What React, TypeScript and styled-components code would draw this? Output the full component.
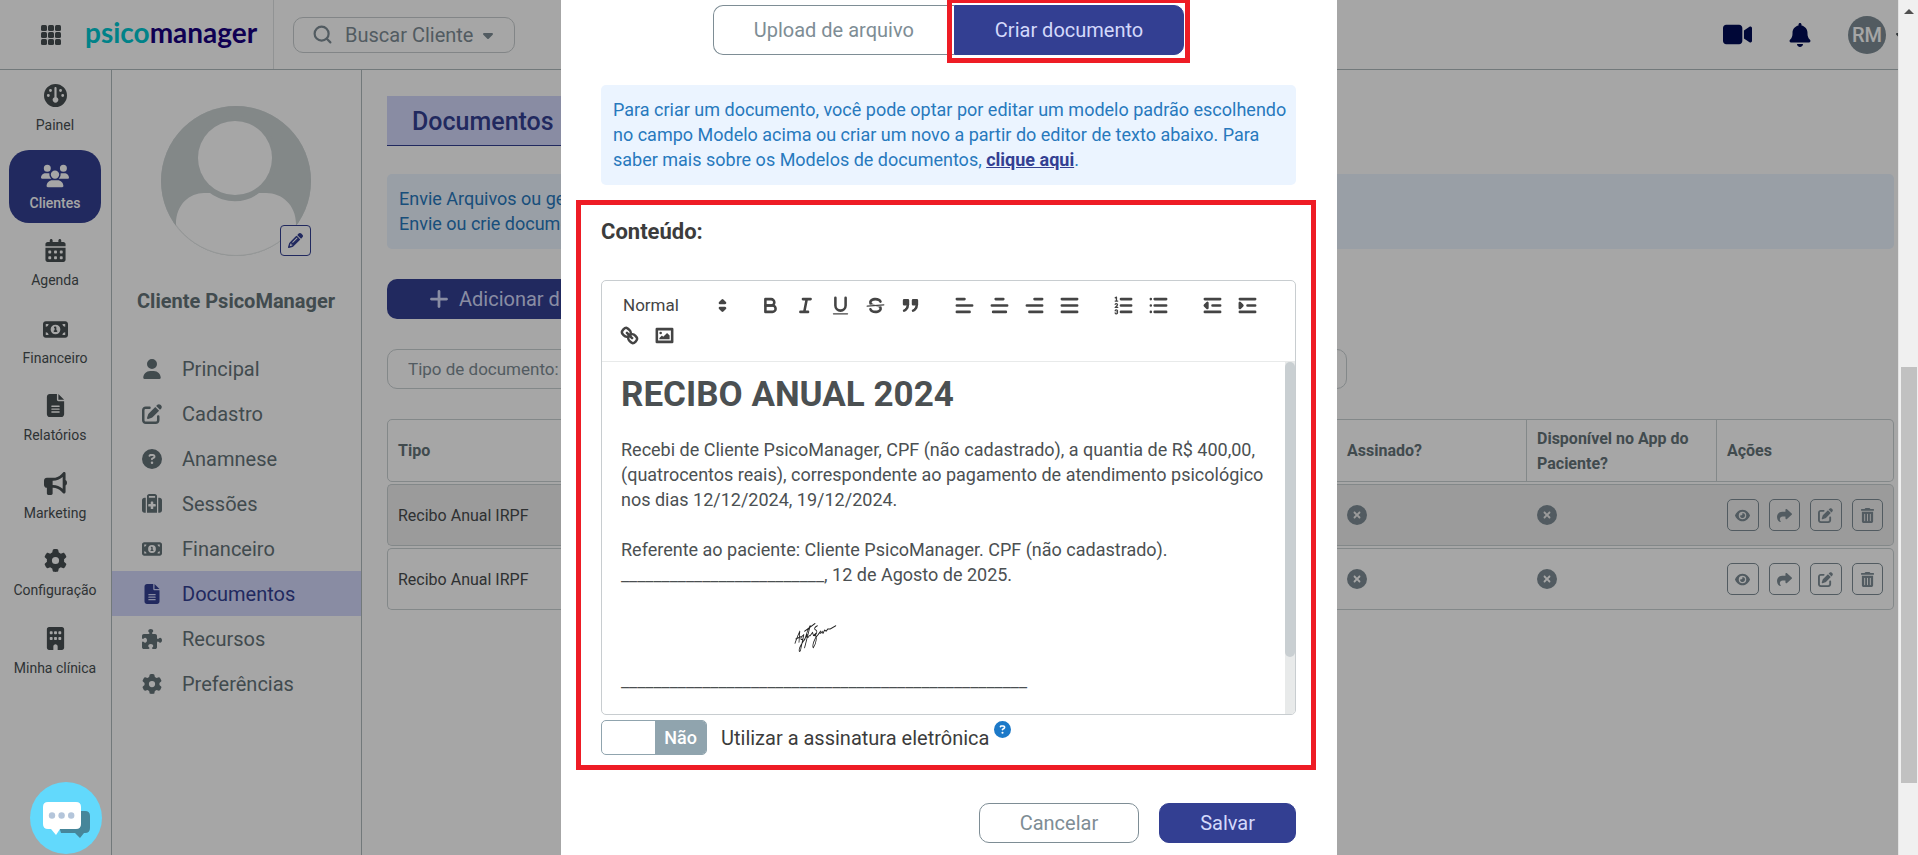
import React from "react";
import styled, { createGlobalStyle, css } from "styled-components";
import {
  FaBell,
  FaBuilding,
  FaBullhorn,
  FaCalendarDays,
  FaCaretDown,
  FaCircleQuestion,
  FaCircleXmark,
  FaEye,
  FaFileLines,
  FaGauge,
  FaGear,
  FaMoneyBill1,
  FaPencil,
  FaPenToSquare,
  FaPlus,
  FaPuzzlePiece,
  FaShare,
  FaSuitcaseMedical,
  FaTrashCan,
  FaUser,
  FaUsers,
  FaVideo,
} from "react-icons/fa6";
import { Search } from "lucide-react";

const color = {
  indigo: "#333f92",
  indigoText: "#d3d9fb",
  lavender: "#d3d8fb",
  slate: "#657379",
  grey: "#7e8d95",
  line: "#b0babd",
  tableLine: "#cad1d3",
  info: "#ebf4ff",
  infoText: "#2779bd",
  red: "#ee1c25",
};

const GlobalStyle = createGlobalStyle`
  *, *::before, *::after { box-sizing: border-box; }
  body { margin: 0; font-family: Roboto, "Liberation Sans", sans-serif; background: #fff; }
  button, input, select { font-family: inherit; }
  a { color: inherit; text-decoration: none; }
  ul { list-style: none; margin: 0; padding: 0; }
  h1, h2, p { margin: 0; }
  svg { flex: none; }
`;

/* ---------- shell ---------- */

const Screen = styled.div`
  display: flex;
  height: 100vh;
  overflow: hidden;
`;

const Page = styled.div`
  position: relative;
  flex: 1;
  min-width: 0;
  display: flex;
  flex-direction: column;
  overflow: hidden;
`;

const Columns = styled.div`
  flex: 1;
  display: flex;
  min-height: 0;
`;

const ScrollBar = styled.div`
  width: 20px;
  flex: none;
  display: flex;
  flex-direction: column;
  align-items: center;
  padding: 9px 1px 0 2px;
  background: #f0f0f0;
  border-left: 1px solid #e2e2e2;
`;

const ScrollArrow = styled.span`
  border: 5px solid transparent;
  border-top: 0;
  border-bottom-color: #505050;
`;

const ScrollThumb = styled.span`
  width: 100%;
  height: 416px;
  margin-top: 353px;
  background: #c1c1c1;
`;

/* ---------- header ---------- */

const Header = styled.header`
  display: flex;
  align-items: stretch;
  height: 70px;
  flex: none;
  border-bottom: 1px solid ${color.line};
`;

const Brand = styled.div`
  display: flex;
  align-items: center;
  gap: 24px;
  width: 274px;
  padding: 0 0 0 41px;
  border-right: 1px solid #dfe2e3;
`;

const IconButton = styled.button`
  display: flex;
  padding: 0;
  border: 0;
  background: none;
  color: #484f52;
`;

const Logo = styled.a`
  font: 700 28px/34px Lato, sans-serif;
  color: #1a0080;
  padding-bottom: 5px;
  span { color: #00c8d2; }
`;

const SearchButton = styled.button`
  display: flex;
  align-items: center;
  align-self: center;
  height: 36px;
  margin-left: 19px;
  padding: 0 18px;
  border: 1px solid #c8cdcf;
  border-radius: 10px;
  background: none;
  color: ${color.grey};
  font-size: 20px;
  span { margin: 0 7px 0 12px; }
`;

const HeaderActions = styled.div`
  display: flex;
  align-items: center;
  gap: 36px;
  margin-left: auto;
  button { color: #000c55; }
`;

const Account = styled.div`
  display: flex;
  align-items: center;
  gap: 10px;
`;

const Initials = styled.span`
  display: grid;
  place-items: center;
  width: 38px;
  height: 38px;
  border-radius: 50%;
  background: ${color.grey};
  color: #fff;
  font-size: 20px;
  font-weight: 500;
`;

const ClippedCaret = styled.span`
  display: flex;
  width: 2px;
  overflow: hidden;
  color: #484f52;
  svg { margin-left: -3px; }
`;

/* ---------- left navigation ---------- */

const MainNav = styled.nav`
  width: 112px;
  flex: none;
  border-right: 1px solid ${color.line};
`;

const NavList = styled.ul`
  display: flex;
  flex-direction: column;
  justify-content: space-between;
  height: 620px;
  padding: 2px 9px;
`;

const NavLink = styled.a<{ $active?: boolean }>`
  display: flex;
  flex-direction: column;
  align-items: center;
  height: 73px;
  width: 92px;
  padding-top: 12px;
  border-radius: 20px;
  color: #484f52;
  font-size: 14px;
  line-height: 20px;
  white-space: nowrap;
  span { display: grid; place-items: center; height: 22px; margin-bottom: 9px; }
  ${(p) =>
    p.$active &&
    css`
      background: ${color.indigo};
      color: #fff;
      font-weight: 500;
    `}
`;

/* ---------- client column ---------- */

const ClientColumn = styled.aside`
  width: 250px;
  flex: none;
  border-right: 1px solid ${color.line};
`;

const Avatar = styled.div`
  position: relative;
  width: 150px;
  height: 150px;
  margin: 36px auto 0 49px;
  svg { display: block; }
`;

const EditPhoto = styled.button`
  position: absolute;
  right: 0;
  bottom: 0;
  display: grid;
  place-items: center;
  width: 31px;
  height: 31px;
  padding: 0;
  border: 1px solid ${color.indigo};
  border-radius: 4px;
  background: #fff;
  color: ${color.indigo};
`;

const ClientName = styled.h2`
  margin: 33px 0 33px;
  padding-left: 25px;
  font-size: 20px;
  line-height: 24px;
  font-weight: 700;
  color: ${color.slate};
  white-space: nowrap;
`;

const MenuLink = styled.a<{ $active?: boolean }>`
  display: flex;
  align-items: center;
  gap: 20px;
  height: 45px;
  padding-left: 30px;
  font-size: 20px;
  color: ${(p) => (p.$active ? color.indigo : color.slate)};
  background: ${(p) => (p.$active ? color.lavender : "transparent")};
  svg { width: 20px; }
`;

/* ---------- content ---------- */

const Main = styled.main`
  flex: 1;
  min-width: 0;
  padding: 26px 4px 0 25px;
`;

const PageTitle = styled.h1`
  width: 100%;
  max-width: 200px;
  height: 50px;
  padding-left: 25px;
  border-bottom: 1px solid ${color.indigo};
  background: ${color.lavender};
  color: ${color.indigo};
  font-size: 25px;
  line-height: 51px;
  font-weight: 500;
`;

const Notice = styled.p`
  padding: 12px 6px 13px 12px;
  border-radius: 5px;
  background: ${color.info};
  color: ${color.infoText};
  font-size: 18px;
  line-height: 25px;
  a {
    color: ${color.indigo};
    font-weight: 700;
    text-decoration: underline;
  }
`;

const PageNotice = styled(Notice)`
  margin: 28px 0 30px;
`;

const AddButton = styled.button`
  display: flex;
  align-items: center;
  gap: 9px;
  height: 40px;
  padding: 0 41px;
  border: 0;
  border-radius: 10px;
  background: ${color.indigo};
  color: ${color.indigoText};
  font-size: 20px;
`;

const Filters = styled.div`
  width: 960px;
  max-width: 100%;
  margin: 30px 0;
`;

const FilterSelect = styled.select`
  appearance: none;
  display: block;
  width: 100%;
  height: 40px;
  padding: 0 20px;
  border: 1px solid ${color.tableLine};
  border-radius: 10px;
  background: none;
  color: ${color.grey};
  font-size: 17px;
`;

const DocTable = styled.table`
  width: 100%;
  table-layout: fixed;
  border-collapse: separate;
  border-spacing: 0 2px;
  margin-top: -2px;
  font-size: 16px;
  line-height: 25px;
  text-align: left;
  color: #484c4e;

  th, td {
    height: 62px;
    padding: 0 10px;
    border: 0 solid ${color.tableLine};
    border-width: 1px 0;
  }
  th {
    height: 63px;
    border-right-width: 1px;
    font-weight: 700;
    color: ${color.slate};
  }
  th:first-child, td:first-child { border-left-width: 1px; border-radius: 5px 0 0 5px; }
  th:last-child, td:last-child { border-right-width: 1px; border-radius: 0 5px 5px 0; }
  tbody tr:nth-child(odd) td { background: #efefef; }
  td > svg { display: block; color: ${color.grey}; }
`;

const RowActions = styled.div`
  display: flex;
  gap: 10px;
`;

const ActionButton = styled.button`
  display: grid;
  place-items: center;
  width: 32px;
  height: 32px;
  padding: 0;
  border: 1px solid ${color.grey};
  border-radius: 5px;
  background: none;
  color: ${color.grey};
`;

/* ---------- modal ---------- */

const Overlay = styled.div`
  position: absolute;
  inset: 0;
  display: flex;
  justify-content: center;
  background: rgba(0, 0, 0, 0.35);
`;

const Modal = styled.section`
  width: 776px;
  max-width: 100%;
  padding: 5px 41px 0 40px;
  background: #fff;
`;

const Tabs = styled.div`
  display: flex;
  justify-content: center;
  margin-bottom: 30px;
`;

const Tab = styled.button<{ $active?: boolean }>`
  position: relative;
  height: 50px;
  padding: 0 40px;
  font-size: 20px;
  border: 1px solid ${(p) => (p.$active ? color.indigo : color.grey)};
  border-radius: ${(p) => (p.$active ? "0 10px 10px 0" : "10px 0 0 10px")};
  border-right-width: ${(p) => (p.$active ? "1px" : "0")};
  background: ${(p) => (p.$active ? color.indigo : "#fff")};
  color: ${(p) => (p.$active ? color.indigoText : color.grey)};
`;

const TabHighlight = styled.span`
  position: absolute;
  inset: -8px -7px -9px -8px;
  border: 5px solid ${color.red};
`;

const Framed = styled.div`
  margin: 15px -20px 33px -25px;
  padding: 12px 15px 10px 20px;
  border: 5px solid ${color.red};
`;

const FieldTitle = styled.h2`
  margin-bottom: 33px;
  font-size: 22px;
  line-height: 30px;
  font-weight: 700;
  color: #3c3c3c;
`;

const Editor = styled.div`
  border: 1px solid #c8cdd0;
  border-radius: 5px;
  overflow: hidden;
`;

const Toolbar = styled.div`
  display: flex;
  flex-wrap: wrap;
  column-gap: 19px;
  padding: 9px 10px 11px;
  border-bottom: 1px solid #e8eaea;
`;

const ToolGroup = styled.div`
  display: flex;
`;

const StylePicker = styled.label`
  display: flex;
  align-items: center;
  width: 122px;
  height: 30px;
  select {
    appearance: none;
    flex: 1;
    min-width: 0;
    height: 30px;
    padding: 0 0 0 11px;
    border: 0;
    background: none;
    font-size: 17px;
    color: #444;
  }
`;

const ToolButton = styled.button`
  width: 35px;
  height: 30px;
  padding: 4px 6px;
  border: 0;
  background: none;
  svg { display: block; }
`;

const EditorBody = styled.div`
  display: flex;
  height: 352px;
`;

const Document = styled.div`
  flex: 1;
  min-width: 0;
  padding: 13px 15px 11px 19px;
  color: #4b5052;
  font-size: 18px;
  line-height: 25px;
  overflow: hidden;
  h1 {
    margin-bottom: 22px;
    font-size: 35px;
    line-height: 40px;
    font-weight: 700;
  }
  svg { display: block; }
`;

const EditorScroll = styled.div`
  width: 10px;
  background: #e8eaea;
  span {
    display: block;
    height: 295px;
    border-radius: 5px;
    background: #c9cfd2;
  }
`;

const SignatureRow = styled.div`
  display: flex;
  align-items: center;
  margin-top: 5px;
`;

const Switch = styled.label`
  display: flex;
  align-items: center;
  font-size: 20px;
  color: #3c3c3c;
  input { position: absolute; opacity: 0; }
`;

const SwitchTrack = styled.span`
  display: flex;
  justify-content: flex-end;
  width: 106px;
  height: 35px;
  margin-right: 14px;
  border: 1px solid #90a4ae;
  border-radius: 5px;
  overflow: hidden;
  b {
    width: 51px;
    background: #90a4ae;
    color: #fff;
    font-size: 18px;
    line-height: 33px;
    font-weight: 500;
    text-align: center;
  }
`;

const HelpButton = styled.button`
  display: flex;
  margin: 0 0 17px 5px;
  padding: 0;
  border: 0;
  background: none;
  color: #1c79c8;
`;

const ModalFooter = styled.footer`
  display: flex;
  justify-content: flex-end;
  gap: 20px;
`;

const FooterButton = styled.button<{ $primary?: boolean }>`
  height: 40px;
  padding: 0 40px;
  font-size: 20px;
  border: 1px solid ${(p) => (p.$primary ? color.indigo : color.grey)};
  border-radius: 10px;
  background: ${(p) => (p.$primary ? color.indigo : "#fff")};
  color: ${(p) => (p.$primary ? color.indigoText : color.grey)};
`;

const ChatButton = styled.button`
  position: absolute;
  left: 30px;
  bottom: 1px;
  width: 72px;
  height: 72px;
  padding: 0;
  border: 0;
  border-radius: 50%;
  background: #62d9fc;
  svg { display: block; }
`;

/* ---------- drawings ---------- */

const AppsIcon = () => (
  <svg width="20" height="20" viewBox="0 0 20 20" fill="currentColor">
    {[0, 7, 14].map((y) =>
      [0, 7, 14].map((x) => <rect key={`${x}-${y}`} x={x} y={y} width="6" height="6" rx="1.5" />)
    )}
  </svg>
);

const AvatarImage = () => (
  <svg width="150" height="150" viewBox="0 0 150 150">
    <clipPath id="avatar-clip">
      <circle cx="75" cy="75" r="75" />
    </clipPath>
    <g clipPath="url(#avatar-clip)">
      <rect width="150" height="150" fill="#cad1d2" />
      <path d="M15 150V118C15 98 29 87 43 87H49C64 98 84 98 98 87H105C121 87 135 99 135 118V150Z" fill="#fff" />
      <circle cx="74" cy="52" r="42" fill="#cad1d2" />
      <circle cx="74" cy="52" r="37" fill="#fff" />
    </g>
    <circle cx="75" cy="75" r="74.5" fill="none" stroke="#cad1d2" strokeOpacity=".5" />
  </svg>
);

const ChatIcon = () => (
  <svg width="72" height="72" viewBox="0 0 72 72">
    <path d="M24 29H55Q60 29 60 34V46Q60 51 55 51H54L50 56L45 51H31Z" fill="#46869a" />
    <path d="M18 20H46Q51 20 51 25V42Q51 47 46 47H30L26 53L21 47H18Q13 47 13 42V25Q13 20 18 20Z" fill="#fff" />
    <g fill="#b4c5da">
      <circle cx="22" cy="33.500" r="3.200" />
      <circle cx="31.600" cy="33.500" r="3.200" />
      <circle cx="41.200" cy="33.500" r="3.200" />
    </g>
  </svg>
);

const SignatureImage = () => (
  <svg width="240" height="81" viewBox="0 0 240 81" fill="none" stroke="#222" strokeWidth="1" strokeLinecap="round" strokeLinejoin="round">
    <path
      transform="translate(34 -2) scale(.8 1.1)"
      d="M175 53L178 47L181 42L180 52M176 49L182 47M185 46C182 47 181 51 185 49L186 45L182 59C181 62 178 60 183 54L188 48L190 45C188 49 192 48 193 46M187 50L191 41L194 37L187 57M187 42L200 35M194 46L197 43L198 46L201 44M203 37C200 38 198 40 201 41C204 42 201 46 199 46C204 45 201 54 198 57C196 56 199 48 204 45L207 42C205 45 208 44 209 42L210 44L212 41L214 42L216 40L219 40L226 37"
    />
  </svg>
);

const iconShapes: Record<string, React.ReactNode> = {
  Negrito: (
    <>
      <path d="M5,4H9.500A2.500,2.500,0,0,1,12,6.500A2.500,2.500,0,0,1,9.500,9H5Z" />
      <path d="M5,9H10.500A2.500,2.500,0,0,1,13,11.500A2.500,2.500,0,0,1,10.500,14H5Z" />
    </>
  ),
  Itálico: <path d="M7 4H13M5 14H11M8 14L10 4" />,
  Sublinhado: (
    <>
      <path d="M5,3V9a4.012,4.012,0,0,0,4,4H9a4.012,4.012,0,0,0,4-4V3" />
      <rect x="3" y="15" width="12" height="1" rx="0.5" fill="#444" stroke="none" />
    </>
  ),
  Tachado: (
    <>
      <path d="M15.500 8.500L2.500 9.500" strokeWidth="1" />
      <g fill="#444" stroke="none">
        <path d="M9.007,8C6.542,7.791,6,7.519,6,6.500,6,5.792,7.283,5,9,5c1.571,0,2.765.679,2.969,1.309a1,1,0,0,0,1.900-.617C13.356,4.106,11.354,3,9,3,6.200,3,4,4.538,4,6.500a3.200,3.200,0,0,0,.5,1.843Z" />
        <path d="M8.984,10C11.457,10.208,12,10.479,12,11.500c0,0.708-1.283,1.500-3,1.500-1.571,0-2.765-.679-2.969-1.309a1,1,0,1,0-1.900.617C4.644,13.894,6.646,15,9,15c2.800,0,5-1.538,5-3.500a3.200,3.200,0,0,0-.5-1.843Z" />
      </g>
    </>
  ),
  Citação: (
    <g fill="#444">
      <rect x="4" y="5" width="3" height="3" />
      <rect x="11" y="5" width="3" height="3" />
      <path d="M7,8c0,4.031-3,5-3,5M14,8c0,4.031-3,5-3,5" />
    </g>
  ),
  "Alinhar à esquerda": <path d="M3 9H15M3 14H13M3 4H9" />,
  Centralizar: <path d="M3 9H15M4 14H14M6 4H12" />,
  "Alinhar à direita": <path d="M3 9H15M5 14H15M9 4H15" />,
  Justificar: <path d="M3 9H15M3 14H15M3 4H15" />,
  "Lista numerada": (
    <>
      <path d="M7 4H15M7 9H15M7 14H15" />
      <g strokeWidth="1">
        <path d="M2.500 5.500H4.500M3.500 5.500V2.500L2.500 3" />
        <path d="M4.500,10.500h-2c0-.234,1.850-1.076,1.850-2.234A0.959,0.959,0,0,0,2.500,8.156" />
        <path d="M2.500,14.846a0.959,0.959,0,0,0,1.850-.109A0.700,0.700,0,0,0,3.750,14a0.688,0.688,0,0,0,.6-0.736,0.959,0.959,0,0,0-1.850-.109" />
      </g>
    </>
  ),
  "Lista com marcadores": <path d="M6 4H15M6 9H15M6 14H15M3 4H3M3 9H3M3 14H3" />,
  "Diminuir recuo": (
    <>
      <path d="M3 14H15M3 4H15M9 9H15" />
      <path d="M5 7V11L3 9Z" fill="#444" />
    </>
  ),
  "Aumentar recuo": (
    <>
      <path d="M3 14H15M3 4H15M9 9H15" />
      <path d="M3 7V11L5 9Z" fill="#444" />
    </>
  ),
  Link: (
    <>
      <path d="M7 7L11 11" />
      <path d="M8.900,4.577a3.476,3.476,0,0,1,.36,4.679A3.476,3.476,0,0,1,4.577,8.900C3.185,7.500,2.035,6.400,4.217,4.217S7.500,3.185,8.900,4.577Z" />
      <path d="M13.423,9.100a3.476,3.476,0,0,0-4.679-.36,3.476,3.476,0,0,0,.36,4.679c1.392,1.392,2.500,2.542,4.679.36S14.815,10.500,13.423,9.100Z" />
    </>
  ),
  Imagem: (
    <>
      <rect x="3" y="4" width="12" height="10" />
      <circle cx="6" cy="7" r="1" fill="#444" stroke="none" />
      <path d="M5 12V11L7 9L8 10L11 7L13 9V12Z" fill="#444" stroke="none" />
    </>
  ),
};

const toolGroups = [
  ["Negrito", "Itálico", "Sublinhado", "Tachado", "Citação"],
  ["Alinhar à esquerda", "Centralizar", "Alinhar à direita", "Justificar"],
  ["Lista numerada", "Lista com marcadores"],
  ["Diminuir recuo", "Aumentar recuo"],
  ["Link", "Imagem"],
];

const ToolIcon = ({ children }: { children: React.ReactNode }) => (
  <svg width="23" height="23" viewBox="0 0 18 18" fill="none" stroke="#444" strokeWidth="2" strokeLinecap="round" strokeLinejoin="round">
    {children}
  </svg>
);

/* ---------- data ---------- */

const mainNav = [
  { label: "Painel", icon: <FaGauge size={23} /> },
  { label: "Clientes", icon: <FaUsers size={28} />, active: true },
  { label: "Agenda", icon: <FaCalendarDays size={23} /> },
  { label: "Financeiro", icon: <FaMoneyBill1 size={25} /> },
  { label: "Relatórios", icon: <FaFileLines size={23} /> },
  { label: "Marketing", icon: <FaBullhorn size={23} /> },
  { label: "Configuração", icon: <FaGear size={23} /> },
  { label: "Minha clínica", icon: <FaBuilding size={23} /> },
];

const clientMenu = [
  { label: "Principal", Icon: FaUser },
  { label: "Cadastro", Icon: FaPenToSquare },
  { label: "Anamnese", Icon: FaCircleQuestion },
  { label: "Sessões", Icon: FaSuitcaseMedical },
  { label: "Financeiro", Icon: FaMoneyBill1 },
  { label: "Documentos", Icon: FaFileLines, active: true },
  { label: "Recursos", Icon: FaPuzzlePiece },
  { label: "Preferências", Icon: FaGear },
];

const documents = ["Recibo Anual IRPF", "Recibo Anual IRPF"];

const rowActions = [
  { label: "Visualizar", Icon: FaEye },
  { label: "Compartilhar", Icon: FaShare },
  { label: "Editar", Icon: FaPenToSquare },
  { label: "Excluir", Icon: FaTrashCan },
];

/* ---------- parts ---------- */

const TopBar = () => (
  <Header>
    <Brand>
      <IconButton aria-label="Aplicativos">
        <AppsIcon />
      </IconButton>
      <Logo href="#">
        <span>psico</span>manager
      </Logo>
    </Brand>
    <SearchButton>
      <Search size={21} strokeWidth={2.5} />
      <span>Buscar Cliente</span>
      <FaCaretDown size={16} />
    </SearchButton>
    <HeaderActions>
      <IconButton aria-label="Vídeo">
        <FaVideo size={29} />
      </IconButton>
      <IconButton aria-label="Notificações">
        <FaBell size={24} />
      </IconButton>
      <Account>
        <Initials>RM</Initials>
        <ClippedCaret>
          <FaCaretDown size={16} />
        </ClippedCaret>
      </Account>
    </HeaderActions>
  </Header>
);

const DocumentsTable = () => (
  <DocTable>
    <colgroup>
      <col />
      <col width="190" />
      <col width="190" />
      <col width="177" />
    </colgroup>
    <thead>
      <tr>
        <th>Tipo</th>
        <th>Assinado?</th>
        <th>Disponível no App do Paciente?</th>
        <th>Ações</th>
      </tr>
    </thead>
    <tbody>
      {documents.map((name, i) => (
        <tr key={i}>
          <td>{name}</td>
          <td>
            <FaCircleXmark size={20} />
          </td>
          <td>
            <FaCircleXmark size={20} />
          </td>
          <td>
            <RowActions>
              {rowActions.map(({ label, Icon }) => (
                <ActionButton key={label} aria-label={label}>
                  <Icon size={15} />
                </ActionButton>
              ))}
            </RowActions>
          </td>
        </tr>
      ))}
    </tbody>
  </DocTable>
);

const RichEditor = () => (
  <Editor>
    <Toolbar>
      <StylePicker>
        <select aria-label="Estilo do texto" defaultValue="Normal">
          <option>Normal</option>
        </select>
        <ToolIcon>
          <path d="M7 11L9 13L11 11ZM7 7L9 5L11 7Z" fill="#444" />
        </ToolIcon>
      </StylePicker>
      {toolGroups.map((group) => (
        <ToolGroup key={group[0]}>
          {group.map((name) => (
            <ToolButton key={name} aria-label={name}>
              <ToolIcon>{iconShapes[name]}</ToolIcon>
            </ToolButton>
          ))}
        </ToolGroup>
      ))}
    </Toolbar>
    <EditorBody>
      <Document>
        <h1>RECIBO ANUAL 2024</h1>
        <p>
          Recebi de Cliente PsicoManager, CPF (não cadastrado), a quantia de R$ 400,00, (quatrocentos reais),
          correspondente ao pagamento de atendimento psicológico nos dias 12/12/2024, 19/12/2024.
        </p>
        <br />
        <p>Referente ao paciente: Cliente PsicoManager. CPF (não cadastrado).</p>
        <p>{"_".repeat(25)}, 12 de Agosto de 2025.</p>
        <SignatureImage />
        <p>{"_".repeat(50)}</p>
      </Document>
      <EditorScroll>
        <span />
      </EditorScroll>
    </EditorBody>
  </Editor>
);

const DocumentModal = () => (
  <Modal role="dialog" aria-label="Documento">
    <Tabs>
      <Tab>Upload de arquivo</Tab>
      <Tab $active>
        Criar documento
        <TabHighlight />
      </Tab>
    </Tabs>
    <Notice>
      Para criar um documento, você pode optar por editar um modelo padrão escolhendo no campo Modelo acima ou criar
      um novo a partir do editor de texto abaixo. Para saber mais sobre os Modelos de documentos,{" "}
      <a href="#">clique aqui</a>.
    </Notice>
    <Framed>
      <FieldTitle>Conteúdo:</FieldTitle>
      <RichEditor />
      <SignatureRow>
        <Switch>
          <input type="checkbox" />
          <SwitchTrack>
            <b>Não</b>
          </SwitchTrack>
          Utilizar a assinatura eletrônica
        </Switch>
        <HelpButton aria-label="Ajuda">
          <FaCircleQuestion size={17} />
        </HelpButton>
      </SignatureRow>
    </Framed>
    <ModalFooter>
      <FooterButton>Cancelar</FooterButton>
      <FooterButton $primary>Salvar</FooterButton>
    </ModalFooter>
  </Modal>
);

export default function App() {
  return (
    <Screen>
      <GlobalStyle />
      <Page>
        <TopBar />
        <Columns>
          <MainNav>
            <NavList>
              {mainNav.map(({ label, icon, active }) => (
                <li key={label}>
                  <NavLink href="#" $active={active}>
                    <span>{icon}</span>
                    {label}
                  </NavLink>
                </li>
              ))}
            </NavList>
          </MainNav>
          <ClientColumn>
            <Avatar>
              <AvatarImage />
              <EditPhoto aria-label="Editar foto">
                <FaPencil size={15} />
              </EditPhoto>
            </Avatar>
            <ClientName>Cliente PsicoManager</ClientName>
            <ul>
              {clientMenu.map(({ label, Icon, active }) => (
                <li key={label}>
                  <MenuLink href="#" $active={active}>
                    <Icon size={20} />
                    {label}
                  </MenuLink>
                </li>
              ))}
            </ul>
          </ClientColumn>
          <Main>
            <PageTitle>Documentos</PageTitle>
            <PageNotice>
              Envie Arquivos ou ge
              <br />
              Envie ou crie docume
            </PageNotice>
            <AddButton>
              <FaPlus size={22} />
              Adicionar d
            </AddButton>
            <Filters>
              <FilterSelect aria-label="Tipo de documento">
                <option>Tipo de documento:</option>
              </FilterSelect>
            </Filters>
            <DocumentsTable />
          </Main>
        </Columns>
        <Overlay>
          <DocumentModal />
        </Overlay>
        <ChatButton aria-label="Abrir chat">
          <ChatIcon />
        </ChatButton>
      </Page>
      <ScrollBar>
        <ScrollArrow />
        <ScrollThumb />
      </ScrollBar>
    </Screen>
  );
}
